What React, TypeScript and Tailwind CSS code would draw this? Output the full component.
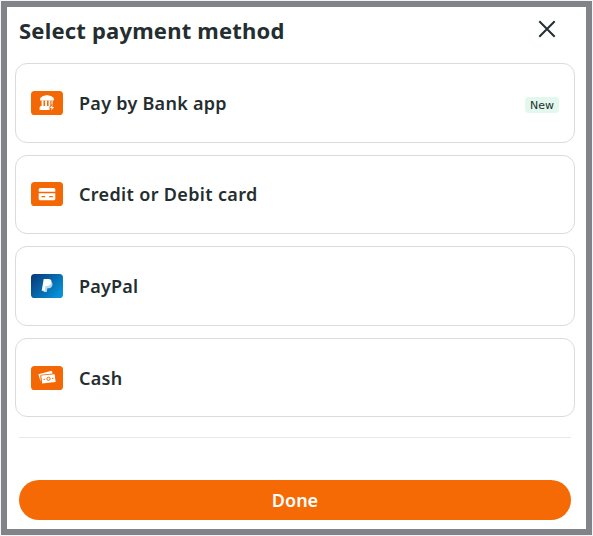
import type { ReactNode } from "react";

function BankIcon() {
  return (
    <svg viewBox="0 0 32 24" className="h-6 w-8 shrink-0">
      <rect width="32" height="24" rx="3.6" fill="#f36805" />
      <g fill="#fff">
        <path d="M16 4.1 20.6 5.2 22.9 7.3V9.6H9.1V7.3L11.4 5.2Z" />
        <path d="M10.6 9.6h1.9v5.6h-1.9zM14.1 9.6H16v5.6h-1.9zM17.6 9.6h1.7v5.6h-1.7zM20.5 9.6h1.1v4h-1.1z" />
        <path d="M9.6 15h8.9v3.9H8.6v-2.4Z" />
        <path d="M21.6 13.7 18.9 16.9h1.8l-.6 2.8 3-3.7h-1.9Z" />
      </g>
    </svg>
  );
}

function CardIcon() {
  return (
    <svg viewBox="0 0 32 24" className="h-6 w-8 shrink-0">
      <rect width="32" height="24" rx="3.6" fill="#f36805" />
      <path d="M8.7 6h14.6l1 1.2v2.6H7.7V7.2ZM7.7 11.2h16.6v6l-1 1.1H8.7l-1-1.1Z" fill="#fff" />
      <path d="M10.5 14.6h3.7M18.2 14.6h3.7" stroke="#f36805" strokeWidth="1.2" />
    </svg>
  );
}

function PayPalIcon() {
  return (
    <svg viewBox="0 0 32 24" className="h-6 w-8 shrink-0">
      <defs>
        <linearGradient id="paypal" x1="0" y1="0" x2="1" y2="0.7">
          <stop offset="0" stopColor="#073775" />
          <stop offset="1" stopColor="#0791d8" />
        </linearGradient>
      </defs>
      <rect width="32" height="24" rx="3.6" fill="url(#paypal)" />
      <path d="M14.1 7.6h5.6c1.7.7 2.1 2.3 1.6 3.8-.6 2-2.1 2.9-4.2 2.9h-.7l-.7 3.8h-3.2Z" fill="#b9d9f0" />
      <path d="M12.7 5.1h4.8c2.3 0 3.4 1.4 2.9 3.5-.6 2.5-2.2 3.5-4.7 3.5h-1.2l-.8 4.7h-3Z" fill="#fff" />
    </svg>
  );
}

function CashIcon() {
  return (
    <svg viewBox="0 0 32 24" className="h-6 w-8 shrink-0">
      <rect width="32" height="24" rx="3.6" fill="#f36805" />
      <path d="m7.4 8.3 13.3-3.6 1 2.8-11.5 1.2-.9.9.4 6.4Z" fill="#fff" />
      <path d="m10.3 9.5 13.4-1.3.9 7.7-13.4 1.6Z" fill="#fff" />
      <circle cx="17.5" cy="12.8" r="1.6" fill="none" stroke="#f36805" strokeWidth="1" />
      <path d="m12.6 13.4 1.6-.2M20.9 12.4l1.6-.2" stroke="#f36805" strokeWidth="1" />
    </svg>
  );
}

function Method({ icon, className, children, badge }: { icon: ReactNode; className: string; children: ReactNode; badge?: string }) {
  return (
    <button className={`flex w-full items-center rounded-xl border border-[#dbdbdb] px-[15px] text-left ${className}`}>
      {icon}
      <span className="ml-4 text-[18px] leading-6 font-semibold text-[#242e30]">{children}</span>
      {badge && (
        <span className="mt-[3px] ml-auto flex h-4 w-[34px] items-center justify-center rounded bg-[#e2f8ec] pt-0.5 font-['DejaVu_Sans',sans-serif] text-[11px] leading-[14px] tracking-normal text-[#242e30]">
          {badge}
        </span>
      )}
    </button>
  );
}

export default function App() {
  return (
    <div className="h-[536px] w-[593px] bg-[#f3f4f5] p-px font-['Noto_Sans',sans-serif]">
      <main className="flex h-[534px] w-[591px] flex-col border-6 border-[#828388] bg-white px-2">
        <header className="flex h-14 items-center justify-between pr-[22px] pb-2 pl-1">
          <h1 className="pb-0.5 text-[22px] leading-8 font-bold tracking-[0.2px] text-[#242e30]">Select payment method</h1>
          <svg viewBox="0 0 18 18" className="mb-1 size-[18px]" fill="none" stroke="#242e30" strokeWidth="2">
            <path d="m1.3 1.3 15.4 15.4M16.7 1.3 1.3 16.7" />
          </svg>
        </header>
        <div className="flex w-[560px] flex-col gap-3">
          <Method icon={<BankIcon />} className="h-20 tracking-[0.27px]" badge="New">Pay by Bank app</Method>
          <Method icon={<CardIcon />} className="h-[79px] pb-0.5 tracking-[0.34px]">Credit or Debit card</Method>
          <Method icon={<PayPalIcon />} className="h-20 tracking-[0.2px]">PayPal</Method>
          <Method icon={<CashIcon />} className="h-[79px] tracking-[0.3px]">Cash</Method>
        </div>
        <hr className="mt-5 ml-1 w-[552px] border-[#e8e8e8]" />
        <button className="mt-[42px] ml-1 flex h-10 w-[552px] shrink-0 items-center justify-center rounded-full bg-[#f56a05] text-[18px] font-semibold text-white">
          Done
        </button>
      </main>
    </div>
  );
}
